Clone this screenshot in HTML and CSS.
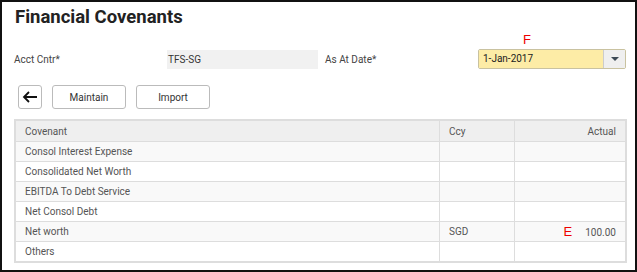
FILE: index.html
```html
<!doctype html>
<html lang="en">
  <head>
    <meta charset="UTF-8" />
    <title>Financial Covenants</title>
    <link rel="stylesheet" href="styles.css">
  </head>
  <body>
    <div class="frame">
      <h1>Financial Covenants</h1>

      <div class="criteria">
        <label class="lbl">Acct Cntr*</label>
        <div class="readonly">TFS-SG</div>
        <label class="lbl lbl-date">As At Date*</label>
        <div class="date-wrap">
          <span class="marker marker-f">F</span>
          <div class="combo">
            <div class="combo-value">1-Jan-2017</div>
            <div class="combo-btn"><span class="caret"></span></div>
          </div>
        </div>
      </div>

      <div class="toolbar">
        <button class="btn btn-back" title="Back">
          <svg width="16" height="12" viewBox="0 0 16 12">
            <path d="M15 6H2M7 1L2 6l5 5" fill="none" stroke="#111" stroke-width="1.8" />
          </svg>
        </button>
        <button class="btn">Maintain</button>
        <button class="btn">Import</button>
      </div>

      <table class="grid">
        <thead>
          <tr>
            <th class="col-name">Covenant</th>
            <th class="col-ccy">Ccy</th>
            <th class="col-amt">Actual</th>
          </tr>
        </thead>
        <tbody>
          <tr><td>Consol Interest Expense</td><td></td><td></td></tr>
          <tr><td>Consolidated Net Worth</td><td></td><td></td></tr>
          <tr><td>EBITDA To Debt Service</td><td></td><td></td></tr>
          <tr><td>Net Consol Debt</td><td></td><td></td></tr>
          <tr>
            <td>Net worth</td>
            <td>SGD</td>
            <td class="amt"><span class="marker marker-e">E</span>100.00</td>
          </tr>
          <tr><td>Others</td><td></td><td></td></tr>
        </tbody>
      </table>
    </div>
  </body>
</html>
```

FILE: styles.css
```css
html, body {
  margin: 0;
  padding: 0;
  background: #fff;
}
.frame {
  box-sizing: border-box;
  width: 637px;
  height: 272px;
  border: 2px solid #111;
  padding: 0 9px 0 12px;
  font-family: Roboto, 'Liberation Sans', sans-serif;
  color: #444;
}
h1 {
  margin: 3px 0 0 1px;
  font-size: 18.5px;
  line-height: 24px;
  font-weight: bold;
  color: #222;
}
.criteria {
  display: flex;
  align-items: center;
  margin-top: 20px;
  height: 20px;
  font-size: 10px;
}
.lbl {
  width: 153px;
}
.readonly {
  box-sizing: border-box;
  width: 151px;
  height: 19px;
  line-height: 19px;
  padding-left: 1px;
  background: #f1f1f1;
  color: #333;
}
.lbl-date {
  margin-left: 7px;
}
.date-wrap {
  position: relative;
}
.combo {
  display: flex;
  box-sizing: border-box;
  width: 148px;
  height: 20px;
  border: 1px solid #c9c2a0;
  border-radius: 2px;
  overflow: hidden;
}
.combo-value {
  flex: 1;
  background: #fdeca6;
  line-height: 18px;
  padding-left: 4px;
  color: #222;
}
.combo-btn {
  width: 21px;
  border-left: 1px solid #ccc;
  background: #efefef;
  display: flex;
  align-items: center;
  justify-content: center;
}
.caret {
  width: 0;
  height: 0;
  border-left: 4px solid transparent;
  border-right: 4px solid transparent;
  border-top: 4px solid #3d4a55;
}
.marker {
  color: #e00;
  font-family: 'Liberation Sans', sans-serif;
  font-size: 13px;
}
.marker-f {
  position: absolute;
  left: 45px;
  top: -17px;
}
.toolbar {
  display: flex;
  gap: 10px;
  margin-top: 16px;
  margin-left: 4px;
}
.btn {
  box-sizing: border-box;
  height: 24px;
  width: 74px;
  padding: 0;
  border: 1px solid #bbb;
  border-radius: 3px;
  background: #fff;
  font-family: Roboto, 'Liberation Sans', sans-serif;
  font-size: 10px;
  color: #333;
}
.btn-back {
  width: 24px;
  display: flex;
  align-items: center;
  justify-content: center;
}
.grid {
  margin-top: 10px;
  width: 613px;
  border-collapse: collapse;
  font-size: 10px;
  color: #555;
  border: 2px solid #ddd;
}
.grid th,
.grid td {
  height: 19px;
  padding: 0 0 0 9px;
  border: 1.5px solid #ddd;
  text-align: left;
  font-weight: normal;
}
.grid th {
  background: #efefef;
  height: 20px;
}
.grid tbody tr:nth-child(odd) td {
  background: #f9f9f9;
}
.col-name {
  width: 414px;
}
.col-ccy {
  width: 65px;
}
.grid .col-amt,
.grid .amt {
  text-align: right;
  padding-right: 9px;
}
.marker-e {
  margin-right: 13px;
}
```
